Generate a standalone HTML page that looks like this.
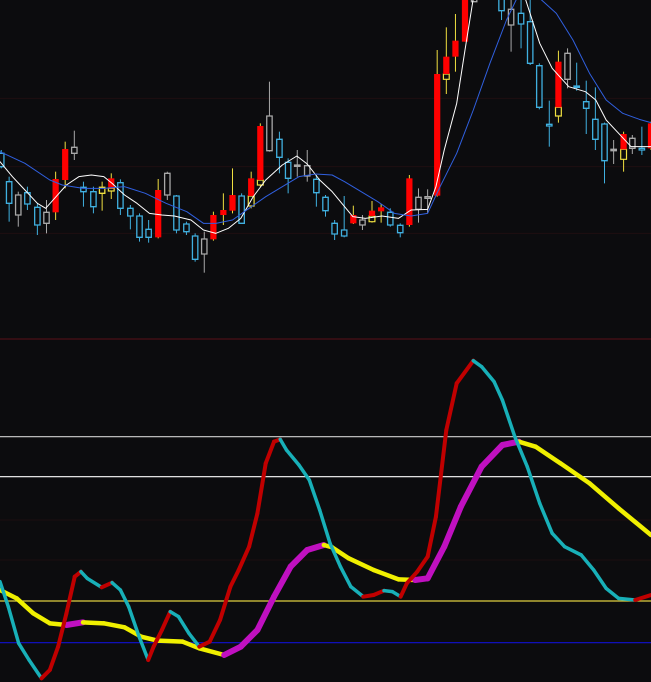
<!DOCTYPE html>
<html><head><meta charset="utf-8"><style>
html,body{margin:0;padding:0;background:#0c0c0e;width:651px;height:682px;overflow:hidden}
svg{position:absolute;left:0;display:block}
</style></head><body>
<svg id="top" style="top:0" width="651" height="340" viewBox="0 0 1568 1020" preserveAspectRatio="none"></svg>
<svg id="bot" style="top:340px" width="651" height="342" viewBox="0 0 1568 1026" preserveAspectRatio="none"></svg>
<script>
var NS='http://www.w3.org/2000/svg';
function el(p,t,a){var e=document.createElementNS(NS,t);for(var k in a)e.setAttribute(k,a[k]);e.setAttribute('vector-effect','non-scaling-stroke');p.appendChild(e);return e;}
var T=document.getElementById('top'),B=document.getElementById('bot');
[295,500,700].forEach(function(y){el(T,'line',{x1:0,x2:1568,y1:y,y2:y,stroke:'#1e0e10','stroke-width':1});});
el(T,'line',{x1:0,x2:1568,y1:1017,y2:1017,stroke:'#5a1018','stroke-width':1});
[540,660].forEach(function(y){el(B,'line',{x1:0,x2:1568,y1:y,y2:y,stroke:'#1c0e10','stroke-width':1});});
var C={c:'#40b0e0',g:'#a8a8a8',y:'#f0e040',r:'#ff0000'};
var K=[[3,460,500,450,505,'c'],[22,545,610,530,665,'c'],[44,585,645,575,680,'g'],[66,578,612,560,630,'c'],[90,622,675,610,705,'c'],[112,637,670,600,700,'g'],
[134,537,637,515,660,'r'],[157,447,540,425,565,'r'],[179,442,460,392,480,'g'],[201,562,575,545,620,'c'],[225,575,620,560,640,'c'],[246,562,580,545,632,'y'],
[268,535,565,520,597,'r',573],[290,548,625,538,645,'c'],[314,625,648,615,688,'c'],[336,648,712,640,725,'c'],[358,688,712,660,728,'c'],[381,570,712,537,715,'r'],
[403,520,585,515,600,'g'],[425,588,690,585,700,'c'],[449,672,695,665,705,'c'],[470,708,778,700,785,'c'],[492,717,762,695,818,'g'],[514,645,718,635,722,'r'],
[538,630,645,580,675,'r'],[560,585,632,505,640,'r'],[582,588,670,580,672,'c'],[605,535,588,515,625,'r',618],[627,378,540,370,560,'r',555],[649,348,452,245,455,'g'],
[673,418,472,395,520,'c'],[694,487,535,475,580,'c'],[716,495,499,450,530,'g'],[740,497,528,450,545,'g'],[762,538,578,525,620,'c'],[784,592,632,585,650,'c'],
[806,670,702,660,720,'c'],[829,690,708,588,712,'c'],[851,645,670,617,672,'r'],[873,660,675,645,690,'g'],[896,632,648,603,668,'r',665],[918,622,634,612,668,'r'],
[940,637,675,625,680,'c'],[964,676,698,670,712,'c'],[986,535,675,525,680,'r'],[1008,592,628,565,668,'g'],[1030,590,595,568,640,'g'],[1053,222,587,150,590,'r'],
[1075,170,222,82,282,'r',238],[1097,122,170,42,215,'r'],[1120,-5,125,-5,125,'r'],[1142,-5,5,-5,5,'g'],[1208,-5,32,-5,60,'c'],[1231,28,75,-5,155,'g'],
[1255,40,72,-5,145,'c'],[1277,65,190,-5,195,'c'],[1299,197,322,190,328,'c'],[1323,373,378,302,440,'c'],[1345,185,322,152,368,'r',348],[1367,160,238,145,265,'g'],
[1389,258,262,188,272,'c'],[1412,305,325,242,402,'c'],[1434,358,418,262,450,'c'],[1456,372,482,368,550,'c'],[1478,448,452,420,492,'g'],[1502,402,448,395,515,'r',478],
[1523,415,445,405,462,'g'],[1546,445,450,380,465,'c'],[1568,370,445,365,450,'r']];
K.forEach(function(k){var x=k[0],col=C[k[5]];
el(T,'line',{x1:x,x2:x,y1:k[3],y2:k[4],stroke:k[5]=='r'?C.y:col,'stroke-width':1});
if(k[5]=='r'){if(k[6])el(T,'rect',{x:x-7,y:k[2],width:14,height:k[6]-k[2],fill:'#0c0c0e',stroke:C.y,'stroke-width':1.2});
el(T,'rect',{x:x-7.5,y:k[1],width:15,height:k[2]-k[1],fill:C.r});}
else el(T,'rect',{x:x-6.5,y:k[1],width:13,height:Math.max(2,k[2]-k[1]),fill:'#0c0c0e',stroke:col,'stroke-width':1.3});});
function pl(p,pts,col,w){el(p,'polyline',{points:pts.map(function(a){return a.join(',')}).join(' '),fill:'none',stroke:col,'stroke-width':w,'stroke-linejoin':'round','stroke-linecap':'round'});}
pl(T,[[0,485],[30,530],[60,570],[90,610],[110,625],[135,590],[160,555],[190,530],[220,525],[250,530],[270,550],[300,585],[330,610],[360,640],[390,645],[420,648],[460,660],[490,690],[520,700],[550,685],[580,655],[610,590],[640,540],[680,495],[715,468],[740,492],[770,540],[800,575],[830,620],[850,650],[880,655],[920,648],[960,655],[990,630],[1030,628],[1050,560],[1070,450],[1100,310],[1120,150],[1140,-5]],'#ffffff',1);
pl(T,[[1265,-5],[1300,130],[1330,205],[1370,260],[1410,275],[1435,300],[1460,360],[1490,400],[1520,440],[1568,440]],'#ffffff',1);
pl(T,[[0,455],[60,490],[120,540],[150,555],[200,565],[250,565],[300,560],[350,580],[400,610],[450,635],[490,670],[520,670],[560,660],[600,625],[640,590],[680,560],[720,530],[760,522],[800,525],[830,545],[870,575],[910,605],[950,640],[990,648],[1030,640],[1060,560],[1100,460],[1140,330],[1180,190],[1220,60],[1245,-5]],'#3060e0',1);
pl(T,[[1300,-5],[1340,40],[1380,120],[1420,220],[1460,300],[1500,340],[1540,358],[1568,368]],'#3060e0',1);
[[290,'#d0d0d0'],[410,'#ffffff'],[783,'#e0d040'],[908,'#1010d0']].forEach(function(a){el(B,'line',{x1:0,x2:1568,y1:a[0],y2:a[0],stroke:a[1],'stroke-width':1.2});});
var F=[[0,725],[20,800],[45,910],[70,960],[100,1015],[120,990],[140,920],[160,820],[180,710],[195,695],[210,715],[245,742],[270,728],[290,750],[310,800],[335,890],[357,960],[370,920],[390,870],[410,815],[430,830],[455,880],[480,920],[505,905],[530,840],[555,740],[575,690],[600,620],[620,520],[640,370],[660,305],[675,298],[690,330],[720,375],[745,420],[770,510],[795,610],[820,680],[845,740],[875,770],[900,765],[925,752],[945,755],[965,770],[980,730],[1005,695],[1030,650],[1050,530],[1075,270],[1100,130],[1140,62],[1160,80],[1190,125],[1210,180],[1240,290],[1270,380],[1300,490],[1330,580],[1360,620],[1400,645],[1430,690],[1460,745],[1490,775],[1530,780],[1568,765]];
var S=[[0,750],[40,775],[80,820],[120,850],[160,855],[200,847],[250,850],[300,862],[340,890],[380,902],[440,905],[480,925],[540,945],[580,920],[620,870],[660,770],[700,680],[740,630],[780,615],[800,622],[840,655],[900,690],[960,718],[1000,720],[1030,715],[1070,620],[1110,500],[1160,380],[1210,315],[1250,305],[1290,320],[1350,370],[1420,430],[1490,505],[1568,585]];
function seg(pts,up,dn,wu,wd){for(var i=0;i<pts.length-1;i++){var a=pts[i],b=pts[i+1],r=b[1]<a[1];pl(B,[a,b],r?up:dn,r?wu:wd);}}
seg(S,'#c010c0','#f0f000',6,4.5);
seg(F,'#c00000','#18b0b8',4,3.5);
</script>
</body></html>
